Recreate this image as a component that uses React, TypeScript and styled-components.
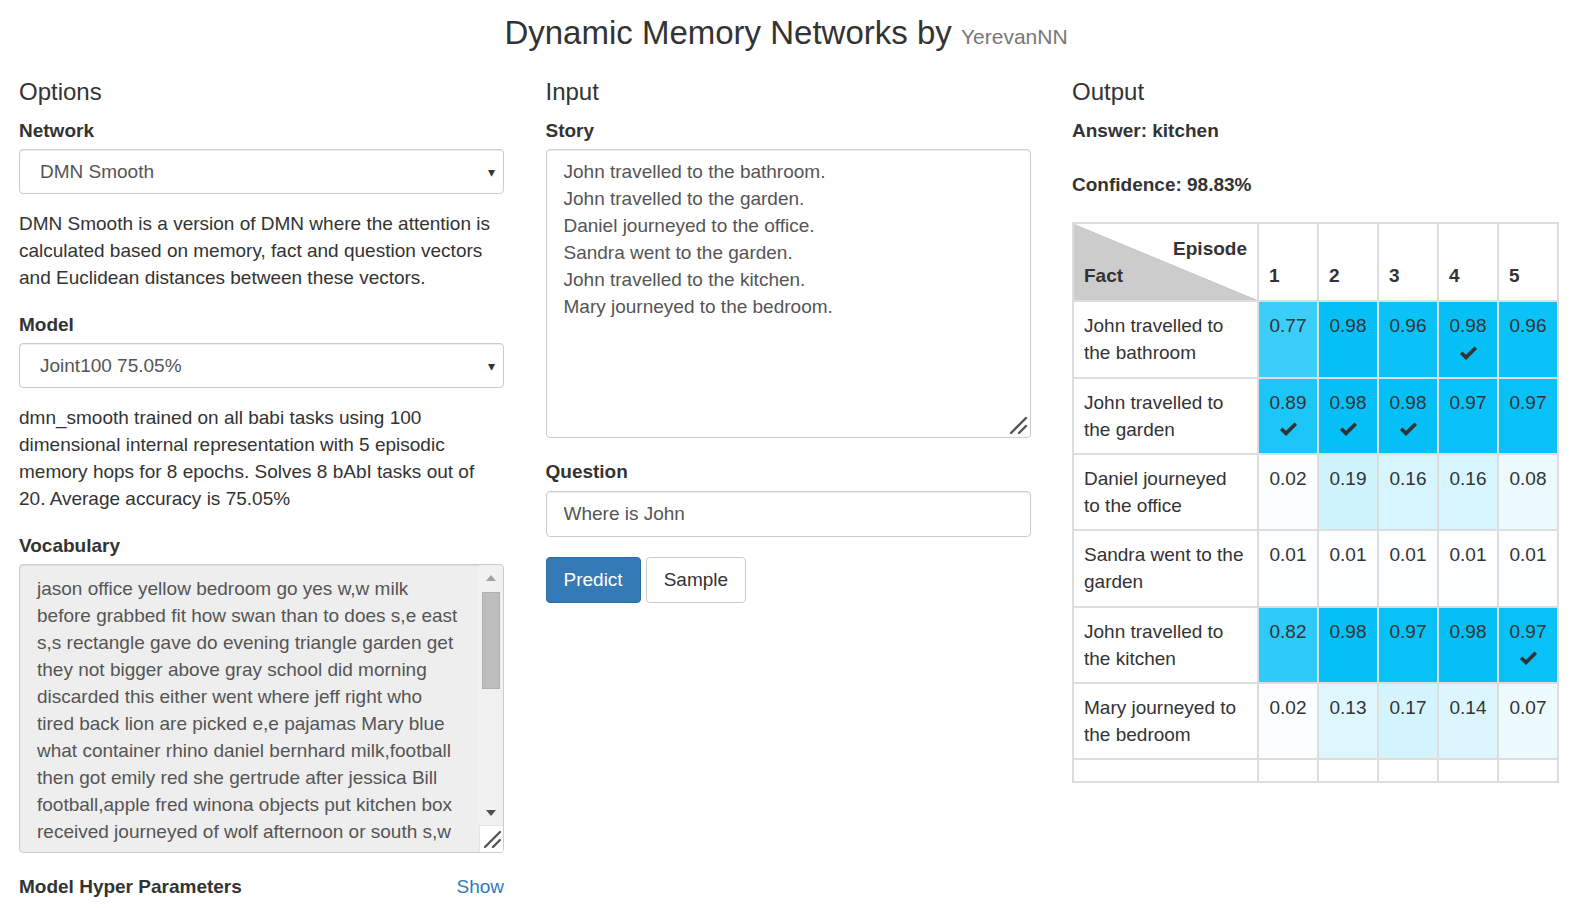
import React from 'react'
import styled, { createGlobalStyle } from 'styled-components'

const GlobalStyle = createGlobalStyle`
  body {
    margin: 0;
    font-family: "Liberation Sans", Arial, sans-serif;
    font-size: 19px;
    line-height: 27px;
    color: #333;
    background: #fff;
  }
`

const Title = styled.h1`
  margin: 15px 0 0;
  text-align: center;
  font-size: 33px;
  font-weight: 400;
  line-height: 1.1;
  color: #333;
`

const TitleSmall = styled.small`
  font-size: 21px;
  color: #777;
`

const Columns = styled.div`
  display: grid;
  grid-template-columns: repeat(3, 485px);
  column-gap: 41.5px;
  padding: 0 19px;
  margin-top: 27.5px;
`

const Column = styled.div`
  display: flex;
  flex-direction: column;
`

const Heading = styled.h3`
  margin: 0;
  font-size: 24px;
  font-weight: 400;
  line-height: 1.1;
`

const Label = styled.label<{ $first?: boolean }>`
  display: block;
  margin: ${p => (p.$first ? '12.3px' : '20.5px')} 0 4.5px;
  font-weight: 700;
  line-height: 27px;
`

const SelectWrap = styled.div`
  position: relative;
  &::after {
    content: '▾';
    position: absolute;
    right: 9px;
    top: 10px;
    font-size: 14px;
    color: #333;
    pointer-events: none;
  }
`

const Select = styled.select`
  appearance: none;
  width: 100%;
  height: 45px;
  padding: 0 20px;
  border: 1px solid #ccc;
  border-radius: 4px;
  background: #fff;
  box-shadow: inset 0 1px 1px rgba(0, 0, 0, 0.075);
  font: inherit;
  color: #555;
`

const Help = styled.p`
  margin: 16px 0 0;
  line-height: 27px;
`

const StoryWrap = styled.div`
  position: relative;
`

const StoryArea = styled.textarea`
  display: block;
  box-sizing: border-box;
  width: 100%;
  height: 289px;
  margin: 0;
  padding: 8px 17px;
  border: 1px solid #ccc;
  border-radius: 4px;
  background: #fff;
  box-shadow: inset 0 1px 1px rgba(0, 0, 0, 0.075);
  font: inherit;
  line-height: 27px;
  color: #555;
  resize: none;
  overflow: hidden;
`

const GripCorner = styled.span`
  position: absolute;
  right: 2px;
  bottom: 2px;
  display: flex;
  width: 22px;
  height: 22px;
`

const VocabBox = styled.div`
  display: flex;
  box-sizing: border-box;
  height: 289px;
  border: 1px solid #ccc;
  border-radius: 4px;
  background: #eee;
  box-shadow: inset 0 1px 1px rgba(0, 0, 0, 0.075);
  overflow: hidden;
`

const VocabArea = styled.textarea`
  flex: 1;
  min-width: 0;
  margin: 0;
  padding: 10px 0 10px 17px;
  border: none;
  background: transparent;
  font: inherit;
  line-height: 27px;
  color: #555;
  resize: none;
  overflow: hidden;
  white-space: pre;
`

const ScrollBar = styled.div`
  display: flex;
  flex-direction: column;
  width: 24px;
  background: #f1f1f1;
`

const ArrowButton = styled.div<{ $h: number }>`
  display: flex;
  align-items: center;
  justify-content: center;
  height: ${p => p.$h}px;
`

const Triangle = styled.span<{ $up?: boolean; $color: string }>`
  width: 0;
  height: 0;
  border-left: 5px solid transparent;
  border-right: 5px solid transparent;
  ${p =>
    p.$up
      ? `border-bottom: 6px solid ${p.$color};`
      : `border-top: 6px solid ${p.$color};`}
`

const Thumb = styled.div`
  height: 95px;
  margin: 1px 3px 0 3px;
  background: #bdbdbd;
  border: 1px solid #b0b0b0;
`

const TrackRest = styled.div`
  flex: 1;
`

const ScrollCorner = styled.div`
  display: flex;
  align-items: center;
  justify-content: center;
  height: 26px;
  background: #fff;
  border-top: 1px solid #e4e4e4;
  border-left: 1px solid #e4e4e4;
`

const TextInput = styled.input`
  box-sizing: border-box;
  width: 100%;
  height: 46px;
  margin-top: 1px;
  padding: 0 17px;
  border: 1px solid #ccc;
  border-radius: 4px;
  box-shadow: inset 0 1px 1px rgba(0, 0, 0, 0.075);
  font: inherit;
  color: #555;
`

const ButtonRow = styled.div`
  display: flex;
  gap: 5px;
  margin-top: 20px;
`

const Button = styled.button<{ $primary?: boolean }>`
  height: 46px;
  padding: 0 17px;
  border: 1px solid ${p => (p.$primary ? '#2e6da4' : '#ccc')};
  border-radius: 4px;
  background: ${p => (p.$primary ? '#337ab7' : '#fff')};
  color: ${p => (p.$primary ? '#fff' : '#333')};
  font: inherit;
  cursor: pointer;
`

const ParamRow = styled.div`
  display: flex;
  justify-content: space-between;
  margin-top: 20.5px;
  line-height: 27px;
`

const Bold = styled.span`
  font-weight: 700;
`

const Link = styled.a`
  color: #337ab7;
  text-decoration: none;
`

const Answer = styled.p<{ $gap: number }>`
  margin: ${p => p.$gap}px 0 0;
  font-weight: 700;
  line-height: 27px;
`

const Table = styled.table`
  margin-top: 24px;
  width: 485px;
  table-layout: fixed;
  border-collapse: collapse;
  line-height: 27px;
`

const Th = styled.th<{ $corner?: boolean }>`
  padding: 11px 10px;
  border: 2px solid #ddd;
  text-align: left;
  vertical-align: bottom;
  font-weight: 700;
  width: ${p => (p.$corner ? '163px' : '38px')};
  background: ${p =>
    p.$corner ? 'linear-gradient(to top right, #ccc 50%, #fff 50.3%)' : '#fff'};
`

const CornerTop = styled.div`
  text-align: right;
`

const FactCell = styled.td`
  padding: 10px 10px 10.3px;
  border: 2px solid #ddd;
  vertical-align: top;
`

const ValueCell = styled.td`
  padding: 10px 0;
  border: 2px solid #ddd;
  vertical-align: top;
  text-align: center;
`

const EmptyCell = styled.td`
  height: 1px;
  padding: 10px;
  border: 2px solid #ddd;
`

const CheckLine = styled.div`
  display: flex;
  justify-content: center;
  align-items: center;
  height: 27px;
`

const Check = () => (
  <svg width="19" height="14" viewBox="0 0 19 14">
    <path d="M2.2 6.8 L7 11.4 L16.8 1.8" fill="none" stroke="#333" strokeWidth="3.6" />
  </svg>
)

const Grip = () => (
  <svg width="22" height="22" viewBox="0 0 22 22">
    <path d="M4 19 L19 4 M12 19 L19 12" stroke="#555" strokeWidth="2.4" strokeLinecap="round" />
  </svg>
)

type Row = { fact: string; values: number[]; pick: number[] }

const rows: Row[] = [
  { fact: 'John travelled to the bathroom', values: [0.77, 0.98, 0.96, 0.98, 0.96], pick: [3] },
  { fact: 'John travelled to the garden', values: [0.89, 0.98, 0.98, 0.97, 0.97], pick: [0, 1, 2] },
  { fact: 'Daniel journeyed to the office', values: [0.02, 0.19, 0.16, 0.16, 0.08], pick: [] },
  { fact: 'Sandra went to the garden', values: [0.01, 0.01, 0.01, 0.01, 0.01], pick: [] },
  { fact: 'John travelled to the kitchen', values: [0.82, 0.98, 0.97, 0.98, 0.97], pick: [4] },
  { fact: 'Mary journeyed to the bedroom', values: [0.02, 0.13, 0.17, 0.14, 0.07], pick: [] },
]

const story = [
  'John travelled to the bathroom.',
  'John travelled to the garden.',
  'Daniel journeyed to the office.',
  'Sandra went to the garden.',
  'John travelled to the kitchen.',
  'Mary journeyed to the bedroom.',
].join('\n')

const vocabulary = [
  'jason office yellow bedroom go yes w,w milk',
  'before grabbed fit how swan than to does s,e east',
  's,s rectangle gave do evening triangle garden get',
  'they not bigger above gray school did morning',
  'discarded this either went where jeff right who',
  'tired back lion are picked e,e pajamas Mary blue',
  'what container rhino daniel bernhard milk,football',
  'then got emily red she gertrude after jessica Bill',
  'football,apple fred winona objects put kitchen box',
  'received journeyed of wolf afternoon or south s,w',
  'moved sheep took north white hallway green julie',
  'cat mouse frog brian greg lily hungry bored thirsty',
  'apple left dropped handed passed travelled sandra',
  'park cinema yesterday bathroom chocolate suitcase',
].join('\n')

const cellColor = (v: number) => `rgba(0, 191, 247, ${v})`

export default function App() {
  return (
    <>
      <GlobalStyle />
      <Title>
        Dynamic Memory Networks by <TitleSmall>YerevanNN</TitleSmall>
      </Title>
      <Columns>
        <Column>
          <Heading>Options</Heading>
          <Label $first>Network</Label>
          <SelectWrap>
            <Select defaultValue="smooth">
              <option value="smooth">DMN Smooth</option>
              <option value="basic">DMN Basic</option>
            </Select>
          </SelectWrap>
          <Help>
            DMN Smooth is a version of DMN where the attention is calculated based on memory, fact
            and question vectors and Euclidean distances between these vectors.
          </Help>
          <Label>Model</Label>
          <SelectWrap>
            <Select defaultValue="joint100">
              <option value="joint100">Joint100 75.05%</option>
            </Select>
          </SelectWrap>
          <Help>
            dmn_smooth trained on all babi tasks using 100 dimensional internal representation with
            5 episodic memory hops for 8 epochs. Solves 8 bAbI tasks out of 20. Average accuracy is
            75.05%
          </Help>
          <Label>Vocabulary</Label>
          <VocabBox>
            <VocabArea readOnly wrap="off" value={vocabulary} />
            <ScrollBar>
              <ArrowButton $h={26}>
                <Triangle $up $color="#a3a3a3" />
              </ArrowButton>
              <Thumb />
              <TrackRest />
              <ArrowButton $h={24}>
                <Triangle $color="#505050" />
              </ArrowButton>
              <ScrollCorner>
                <Grip />
              </ScrollCorner>
            </ScrollBar>
          </VocabBox>
          <ParamRow>
            <Bold>Model Hyper Parameters</Bold>
            <Link href="#">Show</Link>
          </ParamRow>
        </Column>

        <Column>
          <Heading>Input</Heading>
          <Label $first>Story</Label>
          <StoryWrap>
            <StoryArea defaultValue={story} />
            <GripCorner>
              <Grip />
            </GripCorner>
          </StoryWrap>
          <Label>Question</Label>
          <TextInput defaultValue="Where is John" />
          <ButtonRow>
            <Button $primary>Predict</Button>
            <Button>Sample</Button>
          </ButtonRow>
        </Column>

        <Column>
          <Heading>Output</Heading>
          <Answer $gap={12.3}>Answer: kitchen</Answer>
          <Answer $gap={27}>Confidence: 98.83%</Answer>
          <Table>
            <thead>
              <tr>
                <Th $corner>
                  <CornerTop>Episode</CornerTop>
                  <div>Fact</div>
                </Th>
                {[1, 2, 3, 4, 5].map(n => (
                  <Th key={n}>{n}</Th>
                ))}
              </tr>
            </thead>
            <tbody>
              {rows.map(row => (
                <tr key={row.fact}>
                  <FactCell>{row.fact}</FactCell>
                  {row.values.map((v, i) => (
                    <ValueCell key={i} style={{ background: cellColor(v) }}>
                      <div>{v.toFixed(2)}</div>
                      {row.pick.includes(i) && (
                        <CheckLine>
                          <Check />
                        </CheckLine>
                      )}
                    </ValueCell>
                  ))}
                </tr>
              ))}
              <tr>
                {[0, 1, 2, 3, 4, 5].map(i => (
                  <EmptyCell key={i} />
                ))}
              </tr>
            </tbody>
          </Table>
        </Column>
      </Columns>
    </>
  )
}
